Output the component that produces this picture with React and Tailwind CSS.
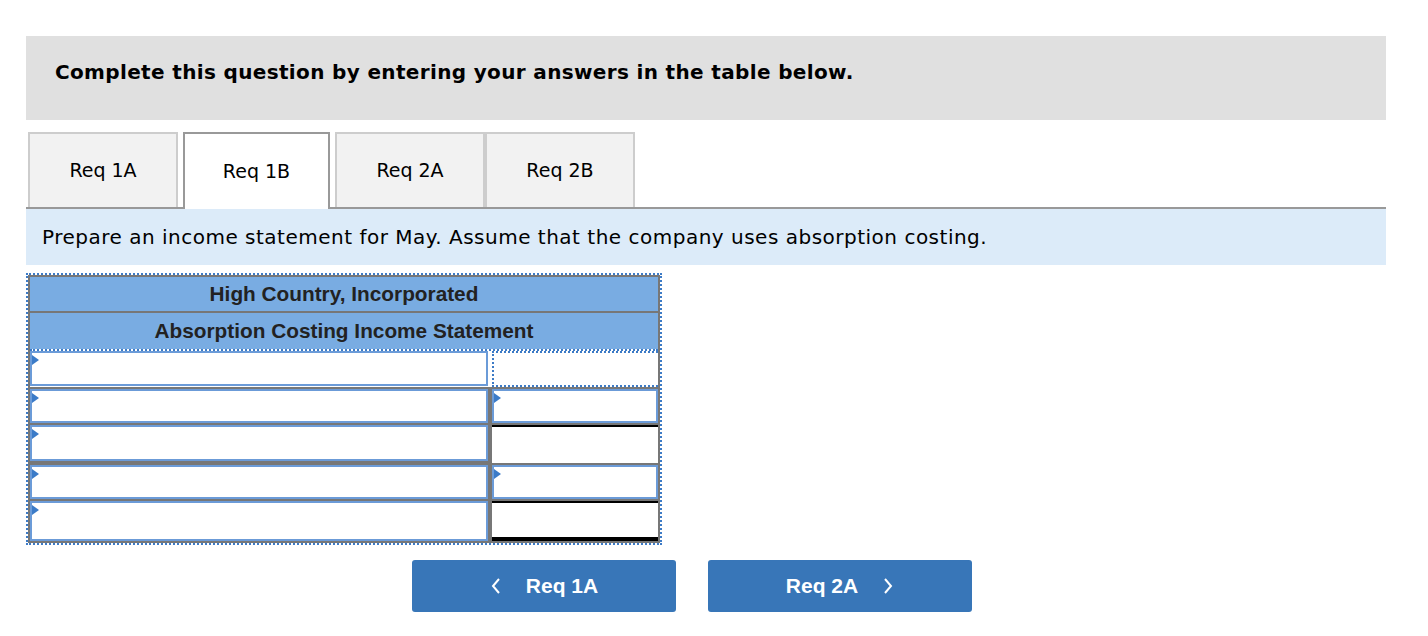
import React from 'react';

const tabs = ['Req 1A', 'Req 1B', 'Req 2A', 'Req 2B'];

function Flag() {
  return (
    <span className="absolute left-0 top-[2px] w-0 h-0 border-y-[5px] border-y-transparent border-l-[7px] border-l-[#3b7bc8]" />
  );
}

function InputCell({ flag = true, className = '' }) {
  return (
    <div className={`relative h-full bg-white border-2 border-[#6b9bd8] ${className}`}>
      {flag && <Flag />}
    </div>
  );
}

export default function App() {
  return (
    <div className="min-h-[636px] bg-white pt-9 pl-[26px] text-black" style={{ fontFamily: '"DejaVu Sans", Verdana, sans-serif' }}>
      <div className="w-[1360px]">
        <div className="h-[84px] bg-[#e0e0e0] pt-[21px] pl-[29px]">
          <p className="text-[20px] font-bold tracking-[0.35px]">Complete this question by entering your answers in the table below.</p>
        </div>

        <div className="mt-3 flex items-end pl-[2px] border-b-2 border-[#999] h-[77px]">
          {tabs.map((t, i) => {
            const active = i === 1;
            return (
              <div
                key={t}
                className={
                  active
                    ? 'w-[147px] h-[77px] -mb-[2px] ml-[5px] mr-[5px] bg-white border-2 border-b-0 border-[#999] flex items-center justify-center text-[19px]'
                    : 'w-[150px] h-[75px] bg-[#f2f2f2] border-2 border-b-0 border-[#cdcdcd] flex items-center justify-center text-[19px]'
                }
              >
                {t}
              </div>
            );
          })}
        </div>

        <div className="h-[56px] bg-[#dcebf9] flex items-center pl-4">
          <p className="text-[20px] tracking-[0.5px]">Prepare an income statement for May. Assume that the company uses absorption costing.</p>
        </div>
      </div>

      <div className="mt-[8px] w-[636px] border-2 border-dotted border-[#3d7bc6]" style={{ fontFamily: '"Liberation Sans", Arial, sans-serif' }}>
        <div className="border-2 border-b-0 border-[#777] bg-[#79ace2]">
          <div className="h-[36px] flex items-center justify-center font-bold text-[20.8px] text-[#222] border-b-2 border-[#777]">High Country, Incorporated</div>
          <div className="h-[36px] flex items-center justify-center font-bold text-[20.8px] text-[#222]">Absorption Costing Income Statement</div>
        </div>

        <div className="border-l-2 border-r-2 border-[#777] border-b-2">
          {/* row 1 */}
          <div className="flex h-[38px] border-t-2 border-dotted border-[#3d7bc6]">
            <div className="w-[458px] pb-[1px]">
              <InputCell />
            </div>
            <div className="flex-1 ml-[4px] border-2 border-dotted border-[#3d7bc6] border-r-0 bg-white" />
          </div>
          {/* row 2 */}
          <div className="flex h-[38px] bg-[#777]">
            <div className="w-[460px] p-[2px] pl-0">
              <InputCell />
            </div>
            <div className="flex-1 p-[2px] pr-0 bg-[#777]">
              <InputCell />
            </div>
          </div>
          {/* row 3 */}
          <div className="flex h-[38px] bg-[#777]">
            <div className="w-[460px] p-[2px] pl-0 pt-0">
              <InputCell />
            </div>
            <div className="flex-1 ml-[2px] bg-white border-t-2 border-black" />
          </div>
          {/* row 4 */}
          <div className="flex h-[38px] bg-[#777]">
            <div className="w-[460px] p-[2px] pl-0">
              <InputCell />
            </div>
            <div className="flex-1 p-[2px] pr-0">
              <InputCell />
            </div>
          </div>
          {/* row 5 */}
          <div className="flex h-[40px] bg-[#777]">
            <div className="w-[460px] p-[2px] pl-0 pt-0 pb-0">
              <InputCell />
            </div>
            <div className="flex-1 ml-[2px] bg-white border-t-2 border-b-4 border-black" />
          </div>
        </div>
      </div>

      <div className="mt-[15px] ml-[386px] flex gap-8" style={{ fontFamily: '"Liberation Sans", Arial, sans-serif' }}>
        <button className="w-[264px] h-[52px] rounded-[3px] bg-[#3876b8] text-white font-bold text-[21px] flex items-center justify-center gap-6">
          <svg width="12" height="18" viewBox="0 0 12 18" fill="none" stroke="white" strokeWidth="2"><path d="M9 2 L3 9 L9 16" /></svg>
          <span>Req 1A</span>
        </button>
        <button className="w-[264px] h-[52px] rounded-[3px] bg-[#3876b8] text-white font-bold text-[21px] flex items-center justify-center gap-6">
          <span>Req 2A</span>
          <svg width="12" height="18" viewBox="0 0 12 18" fill="none" stroke="white" strokeWidth="2"><path d="M3 2 L9 9 L3 16" /></svg>
        </button>
      </div>
    </div>
  );
}
